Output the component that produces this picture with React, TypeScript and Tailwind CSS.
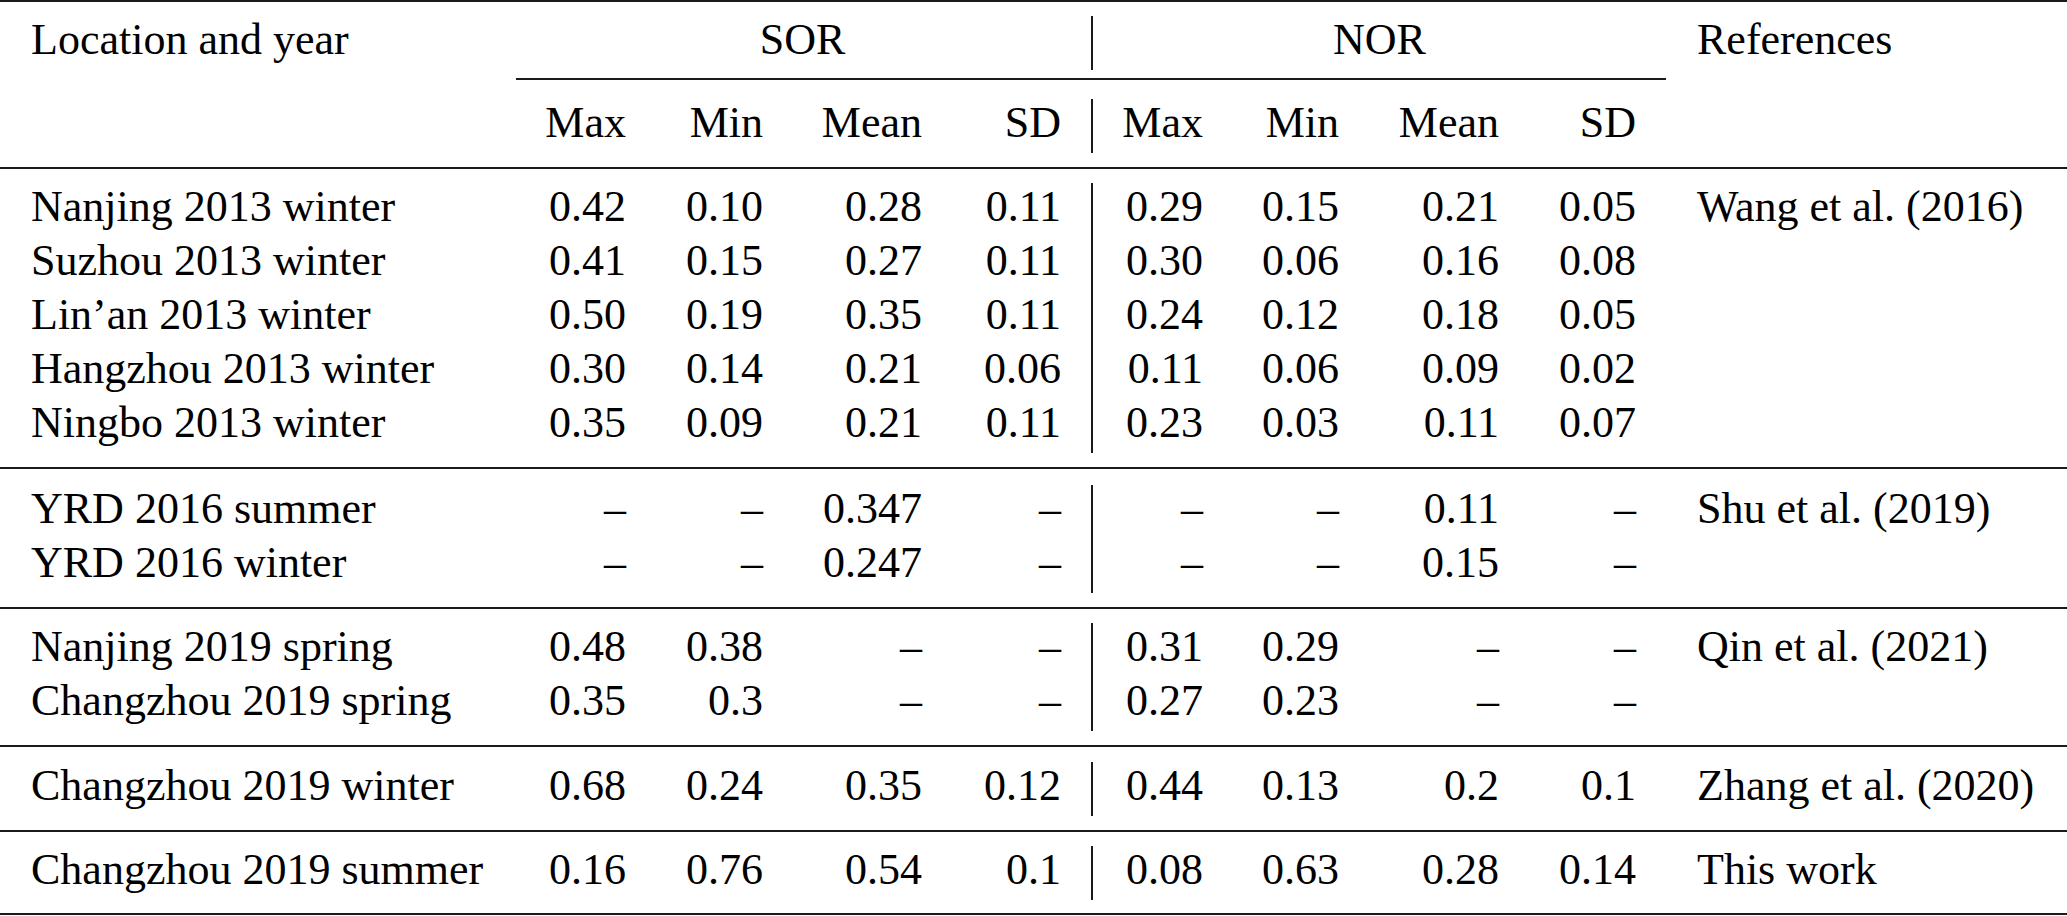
import React from "react";

type Row = { loc: string; v: string[]; ref?: string };

const groups: Row[][] = [
  [
    { loc: "Nanjing 2013 winter", v: ["0.42", "0.10", "0.28", "0.11", "0.29", "0.15", "0.21", "0.05"], ref: "Wang et al. (2016)" },
    { loc: "Suzhou 2013 winter", v: ["0.41", "0.15", "0.27", "0.11", "0.30", "0.06", "0.16", "0.08"] },
    { loc: "Lin\u2019an 2013 winter", v: ["0.50", "0.19", "0.35", "0.11", "0.24", "0.12", "0.18", "0.05"] },
    { loc: "Hangzhou 2013 winter", v: ["0.30", "0.14", "0.21", "0.06", "0.11", "0.06", "0.09", "0.02"] },
    { loc: "Ningbo 2013 winter", v: ["0.35", "0.09", "0.21", "0.11", "0.23", "0.03", "0.11", "0.07"] },
  ],
  [
    { loc: "YRD 2016 summer", v: ["\u2013", "\u2013", "0.347", "\u2013", "\u2013", "\u2013", "0.11", "\u2013"], ref: "Shu et al. (2019)" },
    { loc: "YRD 2016 winter", v: ["\u2013", "\u2013", "0.247", "\u2013", "\u2013", "\u2013", "0.15", "\u2013"] },
  ],
  [
    { loc: "Nanjing 2019 spring", v: ["0.48", "0.38", "\u2013", "\u2013", "0.31", "0.29", "\u2013", "\u2013"], ref: "Qin et al. (2021)" },
    { loc: "Changzhou 2019 spring", v: ["0.35", "0.3", "\u2013", "\u2013", "0.27", "0.23", "\u2013", "\u2013"] },
  ],
  [
    { loc: "Changzhou 2019 winter", v: ["0.68", "0.24", "0.35", "0.12", "0.44", "0.13", "0.2", "0.1"], ref: "Zhang et al. (2020)" },
  ],
  [
    { loc: "Changzhou 2019 summer", v: ["0.16", "0.76", "0.54", "0.1", "0.08", "0.63", "0.28", "0.14"], ref: "This work" },
  ],
];

const gridCols =
  "grid grid-cols-[514px_142px_137px_159px_139px_142px_136px_160px_137px_1fr]";

function Rule({ className }: { className: string }) {
  return <div className={`h-[2px] w-full bg-[#1a1a1a] ${className}`} />;
}

function DataRow({ r }: { r: Row }) {
  return (
    <div className={`${gridCols} h-[54px] leading-[48px]`}>
      <div className="pl-[31px] whitespace-nowrap">{r.loc}</div>
      {r.v.map((x, i) => (
        <div
          key={i}
          className={
            i === 4
              ? "pr-[30px] text-right border-l-2 border-[#1a1a1a]"
              : "pr-[30px] text-right"
          }
        >
          {x}
        </div>
      ))}
      <div className="pl-[31px] whitespace-nowrap">{r.ref ?? ""}</div>
    </div>
  );
}

export default function App() {
  const gapTops = ["mt-[14px]", "mt-[16px]", "mt-[14px]", "mt-[15px]", "mt-[14px]"];
  return (
    <div className="w-[2067px] h-[916px] bg-white text-black text-[44px] font-['Liberation_Serif',_'Times_New_Roman',_serif] overflow-hidden">
      <Rule className="" />
      {/* header row 1 */}
      <div className={`${gridCols} h-[54px] leading-[48px] mt-[14px]`}>
        <div className="pl-[31px] whitespace-nowrap">Location and year</div>
        <div className="col-span-4 text-center">SOR</div>
        <div className="col-span-4 text-center border-l-2 border-[#1a1a1a]">NOR</div>
        <div className="pl-[31px] whitespace-nowrap">References</div>
      </div>
      {/* cmidrule */}
      <div className={`${gridCols} mt-[8px]`}>
        <div className="col-start-2 col-span-8 h-[2px] ml-[2px] bg-[#1a1a1a]" />
      </div>
      {/* header row 2 */}
      <div className={`${gridCols} h-[54px] leading-[48px] mt-[19px]`}>
        <div />
        <div className="pr-[30px] text-right">Max</div>
        <div className="pr-[30px] text-right">Min</div>
        <div className="pr-[30px] text-right">Mean</div>
        <div className="pr-[30px] text-right">SD</div>
        <div className="pr-[30px] text-right border-l-2 border-[#1a1a1a]">Max</div>
        <div className="pr-[30px] text-right">Min</div>
        <div className="pr-[30px] text-right">Mean</div>
        <div className="pr-[30px] text-right">SD</div>
        <div />
      </div>
      <Rule className="mt-[14px]" />
      {groups.map((g, gi) => (
        <div key={gi}>
          <div className={gapTops[gi]}>
            {g.map((r, ri) => (
              <DataRow key={ri} r={r} />
            ))}
          </div>
          <Rule className={gi === groups.length - 1 ? "mt-[13px]" : "mt-[14px]"} />
        </div>
      ))}
    </div>
  );
}
